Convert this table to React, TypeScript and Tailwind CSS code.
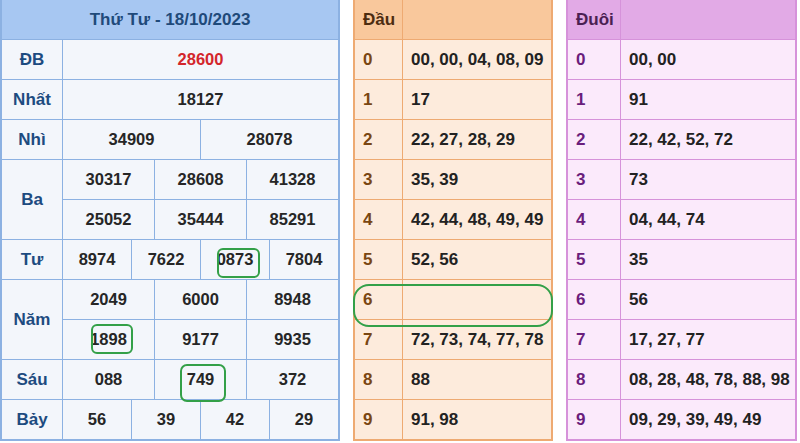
import React from 'react';

type Cell = { v: string; red?: boolean };

const leftRows: { label: string; lines: Cell[][] }[] = [
  { label: 'ĐB', lines: [[{ v: '28600', red: true }]] },
  { label: 'Nhất', lines: [[{ v: '18127' }]] },
  { label: 'Nhì', lines: [[{ v: '34909' }, { v: '28078' }]] },
  { label: 'Ba', lines: [[{ v: '30317' }, { v: '28608' }, { v: '41328' }], [{ v: '25052' }, { v: '35444' }, { v: '85291' }]] },
  { label: 'Tư', lines: [[{ v: '8974' }, { v: '7622' }, { v: '0873' }, { v: '7804' }]] },
  { label: 'Năm', lines: [[{ v: '2049' }, { v: '6000' }, { v: '8948' }], [{ v: '1898' }, { v: '9177' }, { v: '9935' }]] },
  { label: 'Sáu', lines: [[{ v: '088' }, { v: '749' }, { v: '372' }]] },
  { label: 'Bảy', lines: [[{ v: '56' }, { v: '39' }, { v: '42' }, { v: '29' }]] },
];

const dau = ['00, 00, 04, 08, 09', '17', '22, 27, 28, 29', '35, 39', '42, 44, 48, 49, 49', '52, 56', '', '72, 73, 74, 77, 78', '88', '91, 98'];
const duoi = ['00, 00', '91', '22, 42, 52, 72', '73', '04, 44, 74', '35', '56', '17, 27, 77', '08, 28, 48, 78, 88, 98', '09, 29, 39, 49, 49'];

function ResultTable() {
  return (
    <div className="w-[340px] shrink-0 border-x-2 border-b-2 border-[#8cb1e2] bg-[#f3f6fb]">
      <div className="h-[39px] bg-[#a7c7f2] flex items-center justify-center text-[17px] font-bold text-[#1f4a7a]">
        Thứ Tư - 18/10/2023
      </div>
      {leftRows.map((row) => (
        <div key={row.label} className={`flex border-t border-[#8cb1e2] ${row.lines.length === 2 ? 'h-[80px]' : 'h-[40px]'}`}>
          <div className="w-[60px] shrink-0 flex items-center justify-center text-[17px] font-bold text-[#1d4b80]">{row.label}</div>
          <div className="flex-1 flex flex-col border-l border-[#8cb1e2]">
            {row.lines.map((line, i) => (
              <div key={i} className={`flex ${i > 0 ? 'h-[40px] border-t border-[#8cb1e2]' : 'h-[39px]'}`}>
                {line.map((c, j) => (
                  <div
                    key={j}
                    className={`flex-1 flex items-center justify-center text-[16.5px] font-bold ${j > 0 ? 'border-l border-[#8cb1e2]' : ''} ${c.red ? 'text-[#d3262b]' : 'text-[#262626]'}`}
                  >
                    {c.v}
                  </div>
                ))}
              </div>
            ))}
          </div>
        </div>
      ))}
    </div>
  );
}

function HeadTail({ title, data, kind }: { title: string; data: string[]; kind: 'dau' | 'duoi' }) {
  const isDau = kind === 'dau';
  return (
    <div className={`shrink-0 border-x-2 border-b-2 ${isDau ? 'w-[200px] border-[#eeaa72] bg-[#fdebdc]' : 'w-[231px] border-[#d692da] bg-[#fbeafb]'}`}>
      <div className={`h-[39px] flex ${isDau ? 'bg-[#f9c89c]' : 'bg-[#e2aae6]'}`}>
        <div className={`shrink-0 flex items-center pl-[8px] text-[17px] font-bold ${isDau ? 'w-[47px] text-[#4d2c10]' : 'w-[52px] text-[#4b1f52]'}`}>{title}</div>
        <div className={`flex-1 border-l ${isDau ? 'border-[#eeaa72]' : 'border-[#d692da]'}`} />
      </div>
      {data.map((d, i) => (
        <div key={i} className={`h-[40px] flex border-t ${isDau ? 'border-[#eeaa72]' : 'border-[#d692da]'}`}>
          <div className={`shrink-0 flex items-center pl-[8px] text-[17px] font-bold ${isDau ? 'w-[47px] text-[#7a4612]' : 'w-[52px] text-[#6a1d7c]'}`}>{i}</div>
          <div className={`flex-1 flex items-center pl-[8px] border-l text-[17px] font-bold text-[#222] ${isDau ? 'border-[#eeaa72]' : 'border-[#d692da]'}`}>{d}</div>
        </div>
      ))}
    </div>
  );
}

export default function App() {
  return (
    <div className="relative w-[800px] h-[443px] bg-white font-['Liberation_Sans',Arial,sans-serif] overflow-hidden">
      <div className="flex gap-[13px]">
        <ResultTable />
        <HeadTail title="Đầu" data={dau} kind="dau" />
        <HeadTail title="Đuôi" data={duoi} kind="duoi" />
      </div>
      {/* green marks */}
      <div className="absolute left-[217px] top-[248px] w-[43px] h-[30px] border-[2.5px] border-[#33a048] rounded-[6px]" />
      <div className="absolute left-[91px] top-[324px] w-[42px] h-[30px] border-[2.5px] border-[#33a048] rounded-[6px]" />
      <div className="absolute left-[180px] top-[364px] w-[46px] h-[38px] border-[2.5px] border-[#33a048] rounded-[7px]" />
      <div className="absolute left-[353px] top-[284px] w-[200px] h-[43px] border-[2.5px] border-[#33a048] rounded-[16px]" />
    </div>
  );
}
